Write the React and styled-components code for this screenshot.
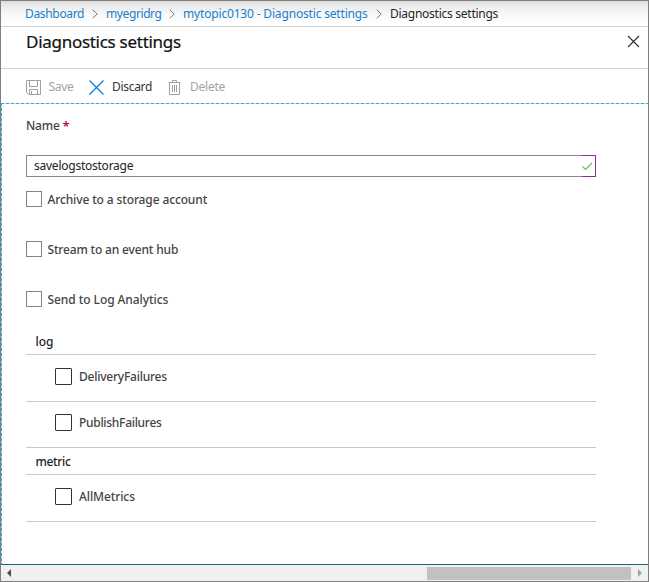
import React from 'react';
import styled, { createGlobalStyle } from 'styled-components';

const GlobalStyle = createGlobalStyle`
  * { box-sizing: border-box; }
  body { margin: 0; background: #fff; font-family: "Noto Sans", "Open Sans", sans-serif; font-size: 12px; overflow: hidden; }
`;

const Frame = styled.div`
  width: 649px; height: 582px; border: 1px solid #807f80; background: #fff;
  display: flex; flex-direction: column;
`;
const Label = styled.span`
  flex: none; width: ${p => p.$w}px; letter-spacing: ${p => p.$ls || 0}px; white-space: nowrap;
`;
const Breadcrumb = styled.nav`
  height: 26px; flex: none; border-bottom: 1px solid #d2d2d2; display: flex; align-items: center;
  padding: 1px 0 0 24px; line-height: 16px; color: #222;
  background: linear-gradient(#dcdadc, #ececec 5px, #f8f8f8 13px, #fff 22px);
`;
const Crumb = styled(Label)`color: ${p => (p.$current ? '#252525' : '#1480cf')};`;
const Chevron = styled.svg`flex: none; width: 6px; height: 10px; margin: 0 8px;`;
const Header = styled.header`
  height: 42px; flex: none; border-bottom: 1px solid #d2d2d2; display: flex; justify-content: space-between;
  padding: 4px 8px 0 25px;
`;
const Title = styled.h1`
  margin: 0; font-size: 17px; line-height: 22px; font-weight: 400; color: #111; letter-spacing: ${p => p.$ls}px;
  -webkit-text-stroke: 0.2px #111;
`;
const Close = styled.svg`width: 13px; height: 13px; margin-top: 4px;`;
const Toolbar = styled.div`
  height: 34px; flex: none; display: flex; align-items: center; padding: 2px 0 0 25px; line-height: 16px;
`;
const Command = styled.div`
  display: flex; align-items: center; width: ${p => p.$w}px; color: ${p => (p.$off ? '#a3a3a3' : '#333')};
  svg { flex: none; margin-right: ${p => p.$gap}px; }
`;
const Content = styled.main`
  flex: 1; padding: 15px 52px 0 24px; color: #444;
  border-left: 1px solid transparent;
  background:
    repeating-linear-gradient(90deg, #25b2df 0 3px, #e2d9d5 3px 5px) 0 0 / 100% 1px no-repeat border-box,
    repeating-linear-gradient(180deg, #25b2df 0 3px, #e2d9d5 3px 5px) 0 0 / 1px 100% no-repeat border-box,
    #fff;
`;
const FieldLabel = styled.div`
  display: flex; line-height: 16px; font-weight: 500; height: 37px;
`;
const Required = styled.span`color: #b5122c; font-weight: 600; font-size: 13px;`;
const Field = styled.div`
  height: 22px; display: flex; border: 1px solid #868686; border-right: 0; padding-left: 7px; line-height: 20px; color: #222;
`;
const Valid = styled.div`
  margin: -1px 0 -1px auto; width: 14px; border: 1px solid #8b2b9c; border-left: 0; display: flex; align-items: center;
`;
const Options = styled.div`padding-top: 13px;`;
const Option = styled.label`
  display: flex; align-items: center; height: 18px; margin-bottom: 32px; line-height: 16px; font-weight: 500;
  ${Label} { padding-top: 2px; }
  &:last-child { margin-bottom: 0; }
`;
const Box = styled.i`
  width: ${p => (p.$dark ? 17 : 16)}px; height: ${p => (p.$dark ? 17 : 16)}px; flex: none; background: #fff;
  border: 1px solid ${p => (p.$dark ? '#333' : '#858585')}; border-radius: ${p => (p.$dark ? 1 : 0)}px;
  margin-right: ${p => (p.$dark ? 7 : 5.5)}px;
`;
const Group = styled.div`
  height: ${p => p.$h}px; border-bottom: 1px solid #c8c8c8; color: #222; font-weight: 500;
  display: flex; align-items: flex-end; padding: 0 0 4px 9.5px; line-height: 16px;
`;
const Row = styled.label`
  height: ${p => p.$h}px; border-bottom: 1px solid #c8c8c8; display: flex; align-items: flex-start;
  padding: ${p => p.$top}px 0 0 29px; line-height: 17px; font-weight: 500;
`;
const Scrollbar = styled.div`
  height: 17px; flex: none; border-top: 1px solid #17628a; background: #f0f0f0; display: flex; align-items: center;
  padding: 0 6px; justify-content: space-between;
`;
const Thumb = styled.div`width: 204px; height: 13px; background: #c1c1c1; margin-left: auto; margin-right: 7px;`;

const Sep = () => <Chevron viewBox="0 0 6 10"><path d="M.7.7 5.2 5 .7 9.3" fill="none" stroke="#777" /></Chevron>;

export default function App() {
  return (
    <>
      <GlobalStyle />
      <Frame>
        <Breadcrumb>
          <Crumb $w={59} $ls={-0.33}>Dashboard</Crumb><Sep />
          <Crumb $w={55} $ls={-0.4}>myegridrg</Crumb><Sep />
          <Crumb $w={185} $ls={-0.17}>mytopic0130 - Diagnostic settings</Crumb><Sep />
          <Crumb $w={110} $ls={-0.26} $current>Diagnostics settings</Crumb>
        </Breadcrumb>
        <Header>
          <Title $ls={-0.28}>Diagnostics settings</Title>
          <Close viewBox="0 0 13 13"><path d="M1 1l11 11M12 1 1 12" stroke="#333" strokeWidth="1.15" fill="none" /></Close>
        </Header>
        <Toolbar>
          <Command $w={63} $gap={7.5} $off>
            <svg width="15" height="15" viewBox="0 0 15 15" fill="none" stroke="#a0a0a0"><path d="M.5.5h14v14H2.5l-2-2zM3.5.5v6h8v-6M3.5 14.5v-5h8v5M5.5 11v3" /></svg>
            <Label $w={26} $ls={-0.3}>Save</Label>
          </Command>
          <Command $w={79} $gap={8}>
            <svg width="15" height="15" viewBox="0 0 15 15" fill="none" stroke="#1482d2" strokeWidth="1.4"><path d="M.5.5l14 14M14.5.5l-14 14" /></svg>
            <Label $w={41} $ls={-0.3}>Discard</Label>
          </Command>
          <Command $w={70} $gap={9} $off>
            <svg width="13" height="15" viewBox="0 0 13 15" fill="none" stroke="#a0a0a0"><path d="M.5 2.5h12M4.5 2V.5h4V2M1.5 3v11.5h10V3M4.5 5v7M6.5 5v7M8.5 5v7" /></svg>
            <Label $w={36} $ls={-0.22}>Delete</Label>
          </Command>
        </Toolbar>
        <Content>
          <FieldLabel><Label $w={36.5} $ls={-0.2}>Name</Label><Required>*</Required></FieldLabel>
          <Field>
            <Label $w={110} $ls={-0.24}>savelogstostorage</Label>
            <Valid><svg width="11" height="9" viewBox="0 0 11 9"><path d="M.5 4.5 3.5 7.5 10 1" fill="none" stroke="#77b75c" strokeWidth="1.2" /></svg></Valid>
          </Field>
          <Options>
            <Option><Box /><Label $w={170} $ls={-0.13}>Archive to a storage account</Label></Option>
            <Option><Box /><Label $w={140} $ls={-0.17}>Stream to an event hub</Label></Option>
            <Option><Box /><Label $w={140} $ls={-0.07}>Send to Log Analytics</Label></Option>
          </Options>
          <Group $h={47}><Label $w={30}>log</Label></Group>
          <Row $h={47} $top={13}><Box $dark /><Label $w={100} $ls={-0.23}>DeliveryFailures</Label></Row>
          <Row $h={46} $top={12}><Box $dark /><Label $w={100} $ls={-0.29}>PublishFailures</Label></Row>
          <Group $h={27}><Label $w={50} $ls={-0.35}>metric</Label></Group>
          <Row $h={47} $top={13}><Box $dark /><Label $w={100} $ls={-0.1}>AllMetrics</Label></Row>
        </Content>
        <Scrollbar>
          <svg width="4" height="8" viewBox="0 0 4 8"><path d="M4 0v8L0 4z" fill="#505050" /></svg>
          <Thumb />
          <svg width="4" height="8" viewBox="0 0 4 8"><path d="M0 0v8l4-4z" fill="#a3a3a3" /></svg>
        </Scrollbar>
      </Frame>
    </>
  );
}
